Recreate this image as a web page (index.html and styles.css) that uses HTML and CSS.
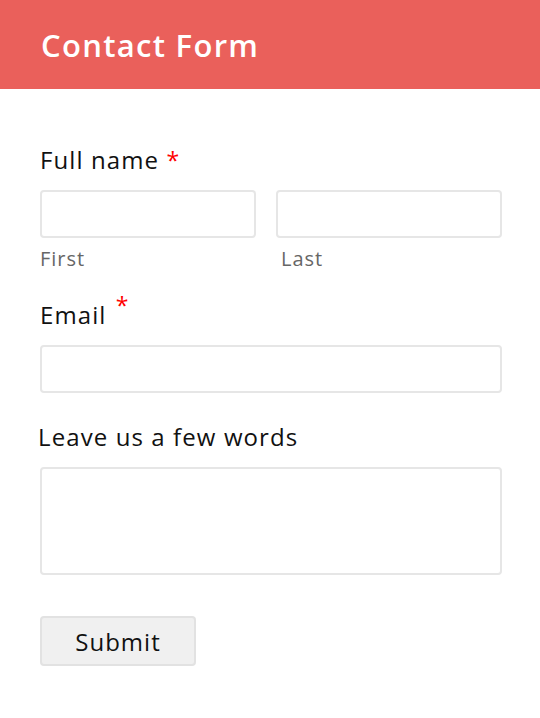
FILE: index.html
```html
<!DOCTYPE html>
<html>
<head>
  <title>Contact Form</title>
  <link rel="stylesheet" href="styles.css">
</head>
<body>
  <div class="header">
    <h1>Contact Form</h1>
  </div>

  <form class="form">
    <div class="field name-field">
      <div class="label">Full name <span class="req">*</span></div>
      <div class="name-row">
        <div class="name-col">
          <input type="text" class="box">
          <div class="sub">First</div>
        </div>
        <div class="name-col">
          <input type="text" class="box">
          <div class="sub last">Last</div>
        </div>
      </div>
    </div>

    <div class="field">
      <div class="label">Email <sup class="req">*</sup></div>
      <input type="text" class="box">
    </div>

    <div class="field">
      <div class="label words">Leave us a few words</div>
      <textarea class="box area"></textarea>
    </div>

    <button type="button" class="submit">Submit</button>
  </form>
</body>
</html>
```

FILE: styles.css
```css
* { box-sizing: border-box; }
body {
  margin: 0;
  padding: 0;
  background: #fff;
  color: #111;
  font-family: "Open Sans", Lato, sans-serif;
}
.header {
  background: #ea605b;
  height: 89px;
  padding: 0 41px;
  display: flex;
  align-items: center;
}
.header h1 {
  margin: 0;
  color: #fff;
  font-size: 31px;
  font-weight: 600;
  letter-spacing: 1.3px;
}
.form {
  padding: 56px 38px 0 40px;
  display: flex;
  flex-direction: column;
}
.field { margin-bottom: 29px; }
.name-field { margin-bottom: 28px; }
.label {
  font-size: 24px;
  line-height: 30px;
  letter-spacing: 1.1px;
  margin-bottom: 15px;
}
.label.words { margin-left: -2px; }
.req {
  color: #f00;
  font-size: 23px;
  letter-spacing: 0;
}
sup.req {
  vertical-align: 0;
  position: relative;
  top: -10px;
  margin-left: 2px;
}
.name-row {
  display: grid;
  grid-template-columns: 216px 1fr;
  gap: 20px;
}
.box {
  display: block;
  width: 100%;
  height: 48px;
  border: 2px solid #e6e6e6;
  border-radius: 4px;
  background: #fff;
  font: inherit;
}
.area {
  height: 108px;
  resize: none;
}
.sub {
  color: #666;
  font-size: 20px;
  letter-spacing: 1px;
  margin-top: 7px;
}
.sub.last { padding-left: 5px; }
.submit {
  width: 156px;
  height: 50px;
  margin-top: 12px;
  background: #f0f0f0;
  border: 2px solid #e2e2e2;
  border-radius: 4px;
  font-family: inherit;
  font-size: 24px;
  letter-spacing: 1px;
  color: #111;
}
```
